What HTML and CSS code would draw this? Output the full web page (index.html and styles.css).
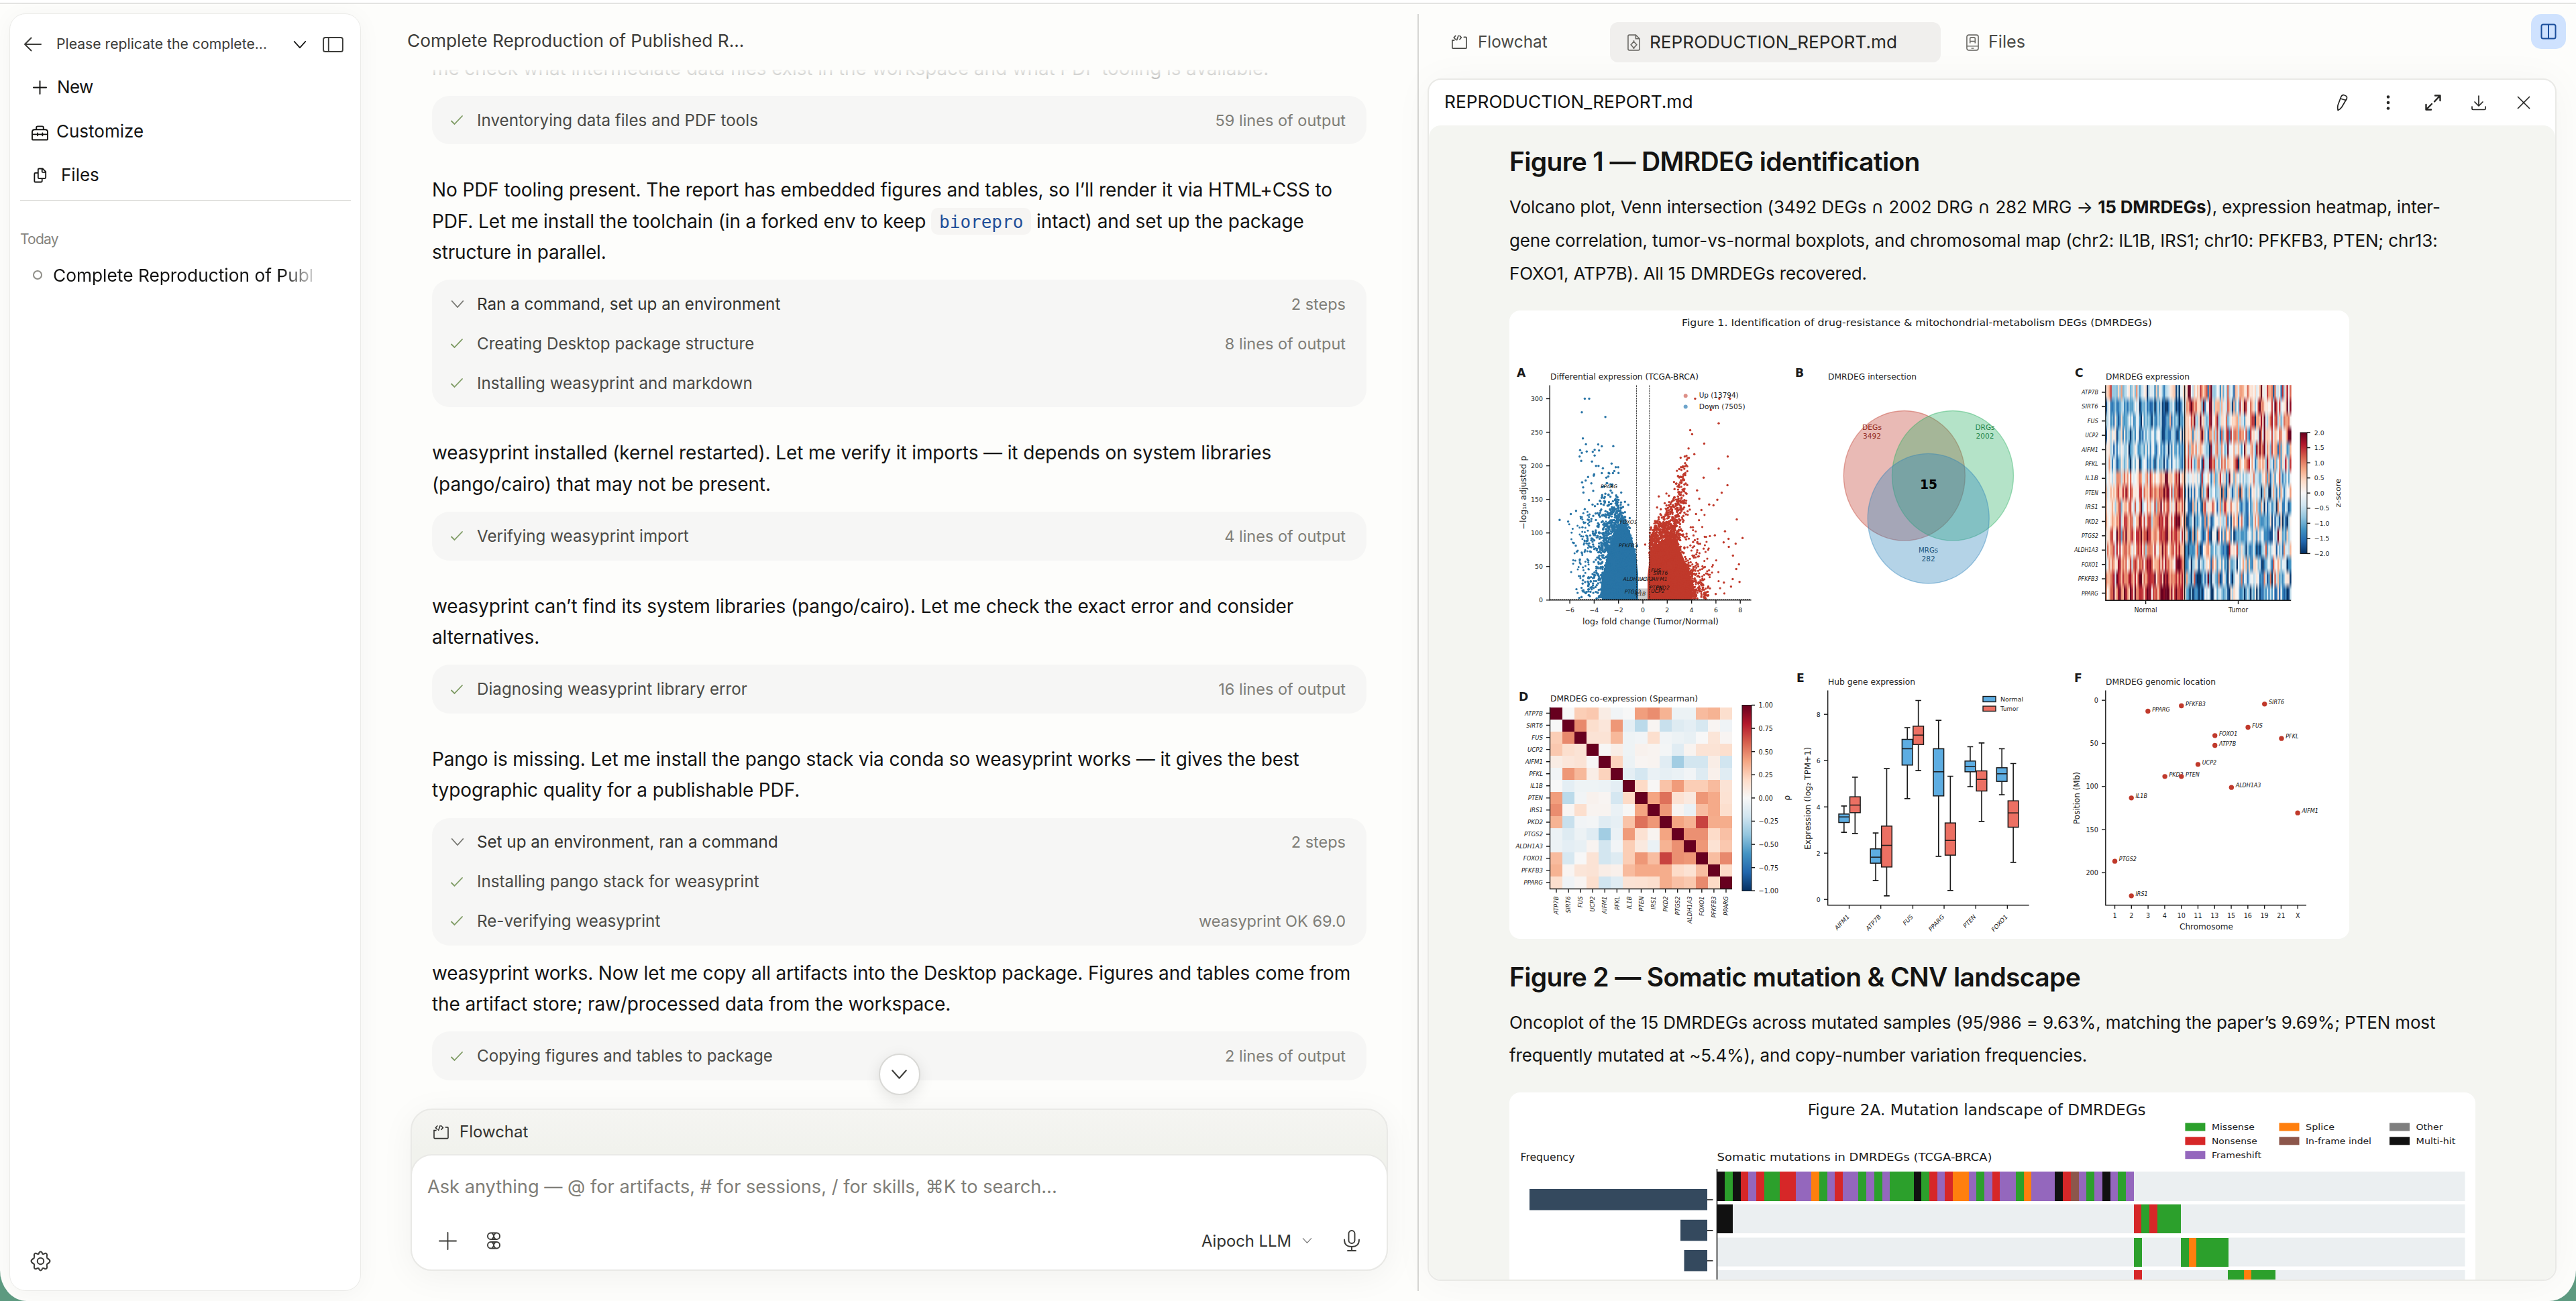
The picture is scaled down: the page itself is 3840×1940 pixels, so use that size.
FILE: index.html
```html
<!DOCTYPE html>
<html lang="en">
<head>
<meta charset="utf-8">
<title>Complete Reproduction of Published Research</title>
<link rel="stylesheet" href="styles.css">
</head>
<body>
<svg width="0" height="0" class="defs" aria-hidden="true">
  <symbol id="check" viewBox="0 0 20 16"><path d="M2 9.5 6.5 14 18 2" fill="none" stroke="#7d9a62" stroke-width="1.8" stroke-linecap="round"/></symbol>
  <symbol id="chev" viewBox="0 0 22 14"><path d="M2 2 11 12 20 2" fill="none" stroke="currentColor" stroke-width="1.8" stroke-linecap="round" stroke-linejoin="round"/></symbol>
  <symbol id="flow" viewBox="0 0 26 22"><path d="M5 8H2v11.500q0 1 1 1h20q1 0 1-1V4q0-1-1-1h-3M7 1 4.500 3.800 7 6.600M13.500 1 16 3.800l-2.500 2.800M11.500 .8 9 7.500" fill="none" stroke="currentColor" stroke-width="1.700" stroke-linecap="round"/></symbol>
</svg>
<div class="window">
  <aside class="sidebar">
    <div class="side-head">
      <svg class="i-back" viewBox="0 0 26 22"><path d="M25 11H1M10.500 1.500 1 11l9.500 9.500"/></svg>
      <span class="side-title">Please replicate the complete...</span>
      <svg class="i-chev"><use href="#chev"/></svg>
      <svg class="i-panel" viewBox="0 0 32 24"><rect x="1" y="1" width="30" height="22" rx="3"/><path d="M9 1v22"/></svg>
    </div>
    <nav>
      <div class="nav-row"><svg class="i-plus" viewBox="0 0 22 22"><path d="M11 1v20M1 11h20"/></svg><span>New</span></div>
      <div class="nav-row"><svg class="i-case" viewBox="0 0 26 24"><path d="M1 22V11Q1 7 5 7h16q4 0 4 4v11q0 1-1 1H2q-1 0-1-1zM7.500 7V4q0-2 2-2h7q2 0 2 2v3M1 14.500h24M9.500 12.500v4M17 12.500v4"/></svg><span>Customize</span></div>
      <div class="nav-row files"><svg class="i-files" viewBox="0 0 22 26"><path d="M7 9H3Q1.500 9 1.500 10.500v12Q1.500 24 3 24h9q2 0 2-2v-4M9 2h6l5 5v9q0 2-2 2H9q-1.500 0-1.500-2V3.500Q7.500 2 9 2zM14 2v5q0 1 1 1h5"/></svg><span>Files</span></div>
    </nav>
    <div class="rule"></div>
    <div class="group">Today</div>
    <div class="session"><i class="ring"></i><span>Complete Reproduction of Publi</span></div>
    <svg class="i-gear" viewBox="0 0 30 30"><path d="M15 1.500q2 0 2.700 3.200 1.800.6 3.300-.9 3.500-.6 3.300 3.200-.9 2.300.3 3.900Q28.500 13 28.500 15t-3.900 4.100q-1.200 1.600-.3 3.900.2 3.800-3.300 3.200-1.500-1.500-3.300-.9-.7 3.200-2.700 3.200t-2.700-3.200q-1.800-.6-3.300.9-3.500.6-3.300-3.200.9-2.300-.3-3.900Q1.500 17 1.500 15t3.900-4.100Q6.600 9.300 5.700 7 5.500 3.200 9 3.800q1.500 1.500 3.300.9Q13 1.500 15 1.500z"/><circle cx="15" cy="15" r="4.600"/></svg>
  </aside>

  <main class="chat">
    <header class="chat-head">Complete Reproduction of Published R...</header>
    <section class="thread">
      <p class="msg first">me check what intermediate data files exist in the workspace and what PDF tooling is available.</p>
      <div class="card"><div class="row"><svg class="ck"><use href="#check"/></svg><span>Inventorying data files and PDF tools</span><em>59 lines of output</em></div></div>
      <p class="msg">No PDF tooling present. The report has embedded figures and tables, so I’ll render it via HTML+CSS to<br>PDF. Let me install the toolchain (in a forked env to keep <code>biorepro</code> intact) and set up the package<br>structure in parallel.</p>
      <div class="card">
        <div class="row top"><svg class="cv"><use href="#chev"/></svg><span>Ran a command, set up an environment</span><em>2 steps</em></div>
        <div class="row"><svg class="ck"><use href="#check"/></svg><span>Creating Desktop package structure</span><em>8 lines of output</em></div>
        <div class="row"><svg class="ck"><use href="#check"/></svg><span>Installing weasyprint and markdown</span></div>
      </div>
      <p class="msg">weasyprint installed (kernel restarted). Let me verify it imports — it depends on system libraries<br>(pango/cairo) that may not be present.</p>
      <div class="card"><div class="row"><svg class="ck"><use href="#check"/></svg><span>Verifying weasyprint import</span><em>4 lines of output</em></div></div>
      <p class="msg">weasyprint can’t find its system libraries (pango/cairo). Let me check the exact error and consider<br>alternatives.</p>
      <div class="card"><div class="row"><svg class="ck"><use href="#check"/></svg><span>Diagnosing weasyprint library error</span><em>16 lines of output</em></div></div>
      <p class="msg">Pango is missing. Let me install the pango stack via conda so weasyprint works — it gives the best<br>typographic quality for a publishable PDF.</p>
      <div class="card">
        <div class="row top"><svg class="cv"><use href="#chev"/></svg><span>Set up an environment, ran a command</span><em>2 steps</em></div>
        <div class="row"><svg class="ck"><use href="#check"/></svg><span>Installing pango stack for weasyprint</span></div>
        <div class="row"><svg class="ck"><use href="#check"/></svg><span>Re-verifying weasyprint</span><em>weasyprint OK 69.0</em></div>
      </div>
      <p class="msg tight">weasyprint works. Now let me copy all artifacts into the Desktop package. Figures and tables come from<br>the artifact store; raw/processed data from the workspace.</p>
      <div class="card"><div class="row"><svg class="ck"><use href="#check"/></svg><span>Copying figures and tables to package</span><em>2 lines of output</em></div></div>
    </section>
    <section class="composer">
      <button class="to-end"><svg><use href="#chev"/></svg></button>
      <div class="context"><svg><use href="#flow"/></svg><span>Flowchat</span></div>
      <div class="box">
        <div class="hint">Ask anything — @ for artifacts, # for sessions, / for skills, ⌘K to search...</div>
        <div class="tools">
          <svg class="t-plus" viewBox="0 0 28 28"><path d="M14 1v26M1 14h26"/></svg>
          <svg class="t-grid" viewBox="0 0 20 26"><rect x="1" y="1.500" width="18" height="9.500" rx="4.500"/><rect x="1" y="15" width="18" height="9.500" rx="4.500"/><path d="M8 2.500q4 3.700 0 7.500M12 2.500q-4 3.700 0 7.500M8 16q4 3.700 0 7.500M12 16q-4 3.700 0 7.500"/></svg>
          <span class="model">Aipoch LLM</span>
          <svg class="t-chev"><use href="#chev"/></svg>
          <svg class="t-mic" viewBox="0 0 24 32"><rect x="7.500" y="1" width="9" height="19" rx="4.500"/><path d="M1 14.500q0 10.500 11 10.500t11-10.500M12 25v6M6 31h12"/></svg>
        </div>
      </div>
    </section>
  </main>

  <section class="pane">
    <div class="tabs">
      <div class="tab plain"><svg class="flow"><use href="#flow"/></svg><span>Flowchat</span></div>
      <div class="tab active"><svg class="doc" viewBox="0 0 20 26"><path d="M1 3q0-2 2-2h10l6 6v16q0 2-2 2H3q-2 0-2-2zM13 1v6h6"/><path d="M10 11.500l4.500 5-4.500 5-4.500-5zM10 11.500v-2M10 21.500v1.500"/></svg><span>REPRODUCTION_REPORT.md</span></div>
      <div class="tab last"><svg class="doc" viewBox="0 0 20 26"><rect x="1" y="1" width="18" height="24" rx="3"/><path d="M6 14V7q0-2 2-2h4q2 0 2 2v7M6 11h8M1 18.500h18M8 22h4"/></svg><span>Files</span></div>
      <button class="split"><svg viewBox="0 0 24 24"><rect x="1.500" y="1.500" width="21" height="21" rx="2.500"/><path d="M12 1.500v21"/></svg></button>
    </div>
    <div class="panel">
      <div class="panel-head">
        <span>REPRODUCTION_REPORT.md</span>
        <svg viewBox="0 0 24 26"><path d="M9.500 5 5 17q-.8 4 .2 7.500Q9 22.500 11 19.500L18 7.500M9.500 5q1.500-4 4.500-3.300 5 1.300 4.500 4.300Q18 9 17 9.500L8.800 7"/></svg>
        <svg viewBox="0 0 24 26" class="solid"><circle cx="12" cy="4.500" r="2.300"/><circle cx="12" cy="13" r="2.300"/><circle cx="12" cy="21.500" r="2.300"/></svg>
        <svg viewBox="0 0 24 26" class="bold"><path d="M14 11.500 22 3M15 2.500h7.500V10M10 15 2 23M1.500 16v7.500H9"/></svg>
        <svg viewBox="0 0 24 26"><path d="M12 3v14.500M6 12l6 6 6-6M2 19v3q0 1.500 1.500 1.500h17q1.500 0 1.500-1.500v-3"/></svg>
        <svg viewBox="0 0 24 26"><path d="M3.500 4.500l17 17M20.500 4.500l-17 17"/></svg>
      </div>
      <article class="report">
        <h2>Figure 1 — DMRDEG identification</h2>
        <p>Volcano plot, Venn intersection (3492 DEGs ∩ 2002 DRG ∩ 282 MRG → <b>15 DMRDEGs</b>), expression heatmap, inter-<br>gene correlation, tumor-vs-normal boxplots, and chromosomal map (chr2: IL1B, IRS1; chr10: PFKFB3, PTEN; chr13:<br>FOXO1, ATP7B). All 15 DMRDEGs recovered.</p>
        <svg id="fig1" class="figure one" viewBox="2250 463.500 1252 937"></svg>
        <h2 class="second">Figure 2 — Somatic mutation &amp; CNV landscape</h2>
        <p>Oncoplot of the 15 DMRDEGs across mutated samples (95/986 = 9.63%, matching the paper’s 9.69%; PTEN most<br>frequently mutated at ~5.4%), and copy-number variation frequencies.</p>
        <svg id="fig2" class="figure two" viewBox="2250 1630 1440 300"></svg>
      </article>
    </div>
  </section>
</div>
<script src="charts.js"></script>
</body>
</html>
```
FILE: styles.css
```css
* { box-sizing: border-box; }
html, body { height: 1940px; overflow: hidden; }
body { margin: 0; background: #5d9a80; font-family: Inter, "Noto Sans", "DejaVu Sans", sans-serif; color: #141413; }
button { border: 0; padding: 0; background: none; }
svg { display: block; flex: none; }
.defs { position: absolute; }
.window { position: relative; display: flex; width: 3840px; height: 1940px; overflow: hidden; white-space: nowrap; background: #fdfdfb; border-top: 4px solid #fff; border-radius: 0 0 40px 40px / 0 0 46px 46px; box-shadow: inset 0 2px 0 #e4e4e2; }

/* Sidebar */
.sidebar { display: flex; flex-direction: column; width: 524px; height: 1905px; margin: 16px 0 0 14px; background: #fff; border: 1.500px solid #ebebe8; border-radius: 24px; box-shadow: 0 4px 36px rgba(0,0,0,.04); }
.sidebar svg { fill: none; stroke: #3c3c39; stroke-width: 2; stroke-linecap: round; stroke-linejoin: round; }
.side-head { display: flex; align-items: center; height: 75px; padding: 15px 25px 0 21px; }
.i-back { width: 26px; height: 22px; }
.side-title { width: 350px; margin: -3px 0 0 22px; font-size: 21.200px; color: #3c3c39; }
.i-chev { width: 22px; height: 13px; margin-left: 2px; }
.i-panel { width: 31px; height: 23px; margin-left: auto; }
.nav-row { display: flex; align-items: center; height: 66px; padding-left: 33px; font-size: 26px; }
.nav-row:first-child { letter-spacing: -.6px; }
.sidebar .nav-row svg { stroke: #141413; }
.i-plus { width: 21px; height: 21px; margin: 3px 15px 0 1px; }
.i-case { width: 25px; height: 24px; margin: 5px 12px 0 -1px; }
.i-files { width: 20px; height: 25px; margin: 2px 21px 0 2px; }
.nav-row.files { height: 64px; }
.rule { height: 2px; margin: 6px 14px 0 15px; background: #e2e2df; }
.group { margin: 42px 0 16px 15px; font-size: 21px; line-height: 30px; letter-spacing: -.8px; color: #85847e; }
.session { display: flex; align-items: center; height: 44px; padding-left: 34px; font-size: 26.300px; }
.ring { width: 14px; height: 14px; margin-right: 16px; border: 2px solid #8e8d87; border-radius: 50%; }
.session span { width: 388px; overflow: hidden; -webkit-mask-image: linear-gradient(90deg, #000 88%, transparent 103%); mask-image: linear-gradient(90deg, #000 88%, transparent 103%); }
.i-gear { width: 31px; height: 31px; margin: auto 0 28px 30px; }

/* Conversation */
.chat { display: flex; flex-direction: column; width: 1577px; height: 1904px; margin-top: 17px; margin-bottom: 16px; padding: 0 44px 30px 74px; border-right: 2px solid #d6d6d3; }
.chat-head { height: 83px; margin-left: -5px; padding-top: 20px; font-size: 26.300px; line-height: 40px; color: #3c3c39; }
.thread { position: relative; height: 1549px; padding: 0 32px; overflow: hidden; }
.thread::before { content: ""; position: absolute; z-index: 1; inset: 0 0 auto; height: 26px; background: linear-gradient(rgba(253,253,251,.92), rgba(253,253,251,.55)); }
.msg { margin: 45px 0 18px; font-size: 28px; line-height: 46.300px; letter-spacing: -.12px; }
.msg.first { margin-top: -25.500px; }
.msg.tight { margin-top: 18px; }
.msg code { display: inline-block; height: 40px; margin-top: 3px; padding: 0 12px; vertical-align: top; border-radius: 10px; background: #f6f5f3; color: #1f4f99; font: 26px/42px "DejaVu Sans Mono", monospace; letter-spacing: 0; }
.card { padding: 7px 31px 7px 27px; border-radius: 26px; background: #f6f6f5; }
.row { display: flex; align-items: center; height: 58.700px; font-size: 24.200px; color: #4a4a46; }
.row.top { color: #333330; }
.row .ck { width: 20px; height: 16px; margin-right: 20px; }
.row .cv { width: 22px; height: 13px; margin-right: 18px; color: #7a7a75; }
.row em { margin-left: auto; font-style: normal; font-size: 23.500px; color: #7f7e78; }

.composer { position: relative; height: 242px; border: 2px solid #e9e9e6; border-radius: 32px; background: linear-gradient(#f5f5f2, #f1f2ed 60px); box-shadow: 0 8px 50px rgba(0,0,0,.05); }
.to-end { position: absolute; left: 50%; top: -84px; display: grid; place-items: center; width: 62px; height: 62px; margin-left: -31px; border: 2px solid #d9d9d6; border-radius: 50%; background: #fff; color: #3c3c39; box-shadow: 0 6px 22px rgba(0,0,0,.1); }
.to-end svg { width: 27px; height: 16px; }
.context { display: flex; align-items: center; height: 66px; padding-left: 31px; font-size: 24px; color: #333330; }
.context span { margin-top: -2px; }
.context svg { width: 25px; height: 21px; margin-right: 15px; }
.box { height: 174px; margin: 0 -2px; padding: 25px 23px; border: 2px solid #e9e9e6; border-radius: 32px; background: #fff; }
.hint { font-size: 27.200px; line-height: 44px; color: #7f7e78; }
.tools { display: flex; align-items: center; height: 60px; margin-top: 28px; padding: 0 17px; }
.tools svg { fill: none; stroke: #3c3c39; stroke-width: 1.900; stroke-linecap: round; }
.t-plus { width: 27px; height: 27px; }
.t-grid { width: 20px; height: 26px; margin-left: 45px; }
.model { margin-left: auto; font-size: 23.800px; color: #333330; }
.t-chev { width: 15px; height: 10px; margin: 0 47px 0 16px; color: #777; }
.t-mic { width: 24px; height: 32px; }

/* Report pane */
.pane { width: 1725px; padding: 17px 29px 0 13px; }
.tabs { display: flex; height: 96px; font-size: 26.200px; color: #4a4a46; }
.tab { display: flex; align-items: center; height: 60px; margin-top: 12px; border-radius: 12px; }
.tab span { margin-top: -2px; }
.tab svg { fill: none; stroke: currentColor; stroke-width: 1.700; }
.tab .flow { width: 25px; height: 22px; margin-right: 15px; }
.tab .doc { width: 19px; height: 25px; margin-right: 14px; color: #6b6a65; }
.plain { width: 237px; margin-left: 35px; font-size: 24.300px; }
.active { width: 493px; padding-left: 26px; background: #f0efed; color: #262624; }
.last { margin-left: 38px; font-size: 25.200px; }
.split { display: grid; place-items: center; width: 52px; height: 52px; margin-left: auto; margin-right: -14px; border-radius: 15px; background: #cfe2fe; }
.split svg { width: 24px; height: 24px; fill: none; stroke: #1c4f9c; stroke-width: 2; }
.panel { display: flex; flex-direction: column; height: 1793px; overflow: hidden; border: 2px solid #e9e9e6; border-radius: 20px; background: #fff; box-shadow: 0 4px 60px rgba(0,0,0,.04); }
.panel-head { display: flex; align-items: center; height: 68px; padding: 0 35px 0 22px; font-size: 26.300px; }
.panel-head span { margin: -3px auto 0 1px; }
.panel-head svg { width: 24px; height: 26px; margin-left: 43.500px; fill: none; stroke: #262624; stroke-width: 1.700; stroke-linecap: round; stroke-linejoin: round; }
.panel-head .solid { fill: #262624; stroke: none; }
.panel-head .bold { stroke-width: 2.400; }
.report { flex: 1; overflow: hidden; padding: 29px 120px 0; border-radius: 18px 18px 0 0; background: #f4f5f1; }
.report h2 { margin: 0; font-size: 39px; line-height: 50px; font-weight: 600; letter-spacing: -.65px; }
.report h2.second { margin-top: 32px; }
.report p { margin: 18px 0 30px; font-size: 26px; line-height: 49.500px; letter-spacing: -.14px; }
.figure { border-radius: 16px; background: #fff; font-family: "DejaVu Sans", sans-serif; }
.one { width: 1252px; height: 937px; }
.two { width: 1440px; height: 300px; }
```
FILE: charts.js
```js
const NS = 'http://www.w3.org/2000/svg';
const fig1 = document.getElementById('fig1');
const fig2 = document.getElementById('fig2');

function add(parent, tag, attrs, text) {
  const node = document.createElementNS(NS, tag);
  for (const key in attrs) node.setAttribute(key, attrs[key]);
  if (text !== undefined) node.textContent = text;
  parent.appendChild(node);
  return node;
}
function label(p, x, y, text, size, o = {}) {
  const a = { x, y, 'font-size': size, fill: o.fill || '#1a1a1a' };
  if (o.anchor) a['text-anchor'] = o.anchor;
  if (o.len) { a.textLength = o.len; a.lengthAdjust = 'spacingAndGlyphs'; }
  if (o.bold) a['font-weight'] = 700;
  if (o.italic) a['font-style'] = 'italic';
  if (o.rot) a.transform = `rotate(${o.rot} ${x} ${y})`;
  return add(p, 'text', a, text);
}
const line = (p, d, w = 1.4, o = {}) => add(p, 'path', { d, stroke: '#1a1a1a', 'stroke-width': w, fill: 'none', ...o });
const rect = (p, x, y, w, h, fill, o = {}) => add(p, 'rect', { x, y, width: w, height: h, fill, ...o });

let seed = 20240;
const rnd = () => ((seed = (seed * 1664525 + 1013904223) % 4294967296) / 4294967296);
const gauss = () => Math.sqrt(-2 * Math.log(rnd() + 1e-9)) * Math.cos(6.28318 * rnd());

const STOPS = ['053061', '2166ac', '4393c3', '92c5de', 'd1e5f0', 'f7f7f7', 'fddbc7', 'f4a582', 'd6604d', 'b2182b', '67001f']
  .map(h => [0, 2, 4].map(i => parseInt(h.slice(i, i + 2), 16)));
function rdbu(v) {
  const t = (Math.max(-1, Math.min(1, v)) + 1) * 5, i = Math.min(9, Math.floor(t)), f = t - i;
  return 'rgb(' + STOPS[i].map((c, k) => Math.round(c + (STOPS[i + 1][k] - c) * f)).join(',') + ')';
}
const defs = add(fig1, 'defs', {});
const bar = add(defs, 'linearGradient', { id: 'bar', x1: 0, y1: 1, x2: 0, y2: 0 });
for (let i = 0; i <= 10; i++) add(bar, 'stop', { offset: i / 10, 'stop-color': rdbu(i / 5 - 1) });

const GENES = ['ATP7B', 'SIRT6', 'FUS', 'UCP2', 'AIFM1', 'PFKL', 'IL1B', 'PTEN', 'IRS1', 'PKD2', 'PTGS2', 'ALDH1A3', 'FOXO1', 'PFKFB3', 'PPARG'];

label(fig1, 2507, 486.5, 'Figure 1. Identification of drug-resistance & mitochondrial-metabolism DEGs (DMRDEGs)', 14.8, { len: 701 });
[['A', 2261, 562.5], ['B', 2676, 562.5], ['C', 3093, 562.5], ['D', 2264, 1045.5], ['E', 2678, 1017.5], ['F', 3092, 1017.5]]
  .forEach(([t, x, y]) => label(fig1, x, y, t, 17.2, { bold: 1 }));
[['Differential expression (TCGA-BRCA)', 2311, 566, 221], ['DMRDEG intersection', 2725, 566, 132], ['DMRDEG expression', 3139, 566, 125],
 ['DMRDEG co-expression (Spearman)', 2311, 1046, 220], ['Hub gene expression', 2725, 1021, 130], ['DMRDEG genomic location', 3139, 1021, 164]]
  .forEach(([t, x, y, len]) => label(fig1, x, y, t, 12.6, { len }));

/* A: volcano */
const vx = v => 2449 + v * 18.15, vy = v => 895.3 - v * 1.001;
const dot = (x, y, c, r = 1.7) => add(fig1, 'circle', { cx: x.toFixed(1), cy: y.toFixed(1), r, fill: c });
const BLUE = '#2874a6', RED = '#c0392b';
rect(fig1, 2441, 878, 17, 17, '#ccc');
add(fig1, 'path', { fill: BLUE, d: 'M2442 895V856L2439 830 2432 800 2424 785 2412 782 2402 808 2394 838 2388 862 2386 880 2388 895z' });
add(fig1, 'path', { fill: RED, d: 'M2456 895V860L2459 833 2466 815 2478 806 2492 804 2502 815 2512 838 2520 862 2524 895z' });
for (let i = 0; i < 1500; i++) {
  const x = -.55 - Math.abs(gauss()) * 1.6, top = 135 * Math.exp(-((x + 2.2) ** 2) / 2.6);
  if (x > -5.6) dot(vx(x), vy(rnd() * (top + 22 * rnd()) + 2), BLUE);
}
for (let i = 0; i < 340; i++) { const y = 70 + Math.abs(gauss()) * 50; if (y < 200) dot(vx(-2.9 + gauss() * (1.25 - y / 260)), vy(y), BLUE); }
for (let i = 0; i < 75; i++) dot(vx(-4.4 - Math.abs(gauss()) * .6), vy(30 + rnd() * 105), BLUE, 1.5);
for (let i = 0; i < 1500; i++) {
  const x = .55 + Math.abs(gauss()) * 1.8, top = 108 * Math.exp(-((x - 1.7) ** 2) / 4.5);
  if (x < 5.6) dot(vx(x), vy(rnd() * (top + 24 * rnd()) + 2), RED);
}
for (let i = 0; i < 430; i++) { const y = 80 + Math.abs(gauss()) * 56; if (y < 215) dot(vx(1.2 + y / 90 + gauss() * (1 - y / 250)), vy(y), RED); }
for (let i = 0; i < 190; i++) dot(vx(3.6 + Math.abs(gauss()) * 1.1), vy(6 + Math.abs(gauss()) * 48), RED, 1.6);
[[300,405],[316,405],[289,466],[375,487],[293,583],[304,609],[349,610],[362,618],[404,617],[283,635],[307,641],[289,647],[329,643],[336,634],[352,637],[281,664],[336,659],[287,683],[326,686],[398,695],[341,706],[350,706],[413,712],[422,712],[334,743],[362,738],[387,737],[423,737],[312,755],[303,771],[290,779],[324,784],[294,802],[295,825],[433,825],[459,880],[315,859],[300,899],[268,907],[249,921],[208,947],[239,955],[260,1051],[267,1063],[271,1089],[282,1124],[293,1217],[296,1197]]
  .forEach(([x, y]) => dot(2240 + x / 2.45, 460 + y / 3, BLUE, 1.7));
[[703,405],[791,405],[830,405],[760,455],[789,515],[685,546],[692,564],[736,606],[679,628],[700,653],[822,664],[650,669],[665,664],[680,670],[789,718],[734,758],[821,792],[710,815],[800,826],[570,842],[607,839],[718,853],[784,857],[754,878],[770,882],[564,892],[726,903],[706,921],[576,922],[855,945],[812,998],[876,1028],[825,1032],[775,1016],[851,1054],[807,1048],[826,1068],[841,1107],[863,1146],[853,1167],[865,1225],[840,1212],[834,1246],[808,1228],[778,1279]]
  .forEach(([x, y]) => dot(2240 + x / 2.45, 460 + y / 3, RED, 1.7));
[[358,805,'PPARG'],[428,963,'FOXO1'],[424,1068,'PFKFB3'],[440,1220,'ALDH1A3'],[500,1220,'UCP2'],[445,1275,'PTGS2'],[482,1285,'IL1B'],[542,1180,'FUS'],[550,1191,'SIRT6'],[545,1218,'AIFM1'],[536,1258,'PTEN'],[560,1258,'PKD2'],[542,1274,'UCP2']]
  .forEach(([x, y, t]) => label(fig1, 2240 + x / 2.45, 460 + y / 3, t, 7.6, { italic: 1, fill: '#111' }));
line(fig1, 'M2439.600 575V895M2458.800 575V895', .9, { 'stroke-dasharray': '2.500 1.200' });
line(fig1, 'M2310.200 575V895.300H2610.600');
line(fig1, 'M2310 894.500H2610', 1.6, { 'stroke-dasharray': '1.500 1.500' });
for (let v = 0; v <= 300; v += 50) { line(fig1, `M2305 ${vy(v)}h5.500`); label(fig1, 2300, vy(v) + 3.6, v, 9.4, { anchor: 'end' }); }
for (let v = -6; v <= 8; v += 2) { line(fig1, `M${vx(v)} 895v5.500`); label(fig1, vx(v), 913.5, String(v).replace('-', '−'), 9.4, { anchor: 'middle' }); }
add(fig1, 'circle', { cx: 2512.7, cy: 590.7, r: 3, fill: '#dd9088' }); label(fig1, 2532.7, 593.6, 'Up (13794)', 10.4, { len: 59 });
add(fig1, 'circle', { cx: 2512.7, cy: 607, r: 3, fill: '#6da4cb' }); label(fig1, 2532.7, 610, 'Down (7505)', 10.4, { len: 69 });
label(fig1, 2274.5, 790, '−log₁₀ adjusted p', 11.4, { rot: -90, len: 110 });
label(fig1, 2359, 931.7, 'log₂ fold change (Tumor/Normal)', 12, { len: 203 });

/* B: Venn */
[[2838.8, 709.8, '#c0392b'], [2911, 709.8, '#27ae60'], [2874.7, 773.7, '#2980b9']].forEach(([cx, cy, c]) =>
  add(fig1, 'ellipse', { cx, cy, rx: 90.5, ry: 96.8, fill: c, 'fill-opacity': .35, stroke: c, 'stroke-opacity': .4, 'stroke-width': 1.4 }));
[[2790.5, 641, 'DEGs', '3492', '#922b21'], [2959, 641, 'DRGs', '2002', '#1e8449'], [2874.6, 824.7, 'MRGs', '282', '#1a5276']].forEach(([x, y, a, b, fill]) => {
  label(fig1, x, y, a, 11, { anchor: 'middle', fill, len: 29 });
  label(fig1, x, y + 13.2, b, 11, { anchor: 'middle', fill, len: b.length * 6.7 });
});
label(fig1, 2875, 729, '15', 20, { bold: 1, anchor: 'middle', fill: '#000', len: 26 });

/* C: expression heatmap */
const COLS = 122, NORMAL = 52, cw = 276.5 / COLS;
const normalMean = [-.3, -.75, -.65, -.5, -.45, -.45, .3, .5, .35, .6, .65, .6, .6, .75, .85];
const tumorMean = [.2, .35, .35, .35, .3, .3, -.1, -.35, -.25, -.5, -.5, -.5, -.5, -.5, -.65];
for (let c = 0; c < COLS; c++) {
  const g = add(defs, 'linearGradient', { id: 'c' + c, x1: 0, y1: 0, x2: 0, y2: 1 });
  const normal = c < NORMAL, drift = gauss() * .2;
  for (let r = 0; r < 15; r++) {
    const v = (normal ? normalMean : tumorMean)[r] * .8 + drift * (r < 6 ? -1 : 1) + gauss() * (normal ? .25 : .4);
    const col = rdbu(v);
    add(g, 'stop', { offset: (r + .25) / 15, 'stop-color': col });
    add(g, 'stop', { offset: (r + .75) / 15, 'stop-color': col });
  }
  rect(fig1, (3138.8 + c * cw).toFixed(2), 574.7, cw + .4, 321, `url(#c${c})`);
}
line(fig1, 'M3256.700 575V895', 1.4);
line(fig1, 'M3138.800 574.700V895.700H3415.200M3198.600 896v5.500M3336.500 896v5.500');
GENES.forEach((g, i) => {
  const y = 585.4 + i * 21.4;
  line(fig1, `M3133 ${y}h5.500`, 1.6);
  label(fig1, 3127.8, y + 3, g, 8.2, { anchor: 'end', italic: 1, len: g.length * 5.35 - (g === 'FUS' ? 0 : 2) });
});
label(fig1, 3198.6, 913.3, 'Normal', 9.8, { anchor: 'middle', len: 34 });
label(fig1, 3336.5, 913.3, 'Tumor', 9.8, { anchor: 'middle', len: 29 });
rect(fig1, 3429, 645.5, 10, 180.5, 'url(#bar)', { stroke: '#1a1a1a', 'stroke-width': 1 });
for (let i = 0; i <= 8; i++) {
  const v = 2 - i / 2, y = 645.5 + i * 22.55;
  line(fig1, `M3439 ${y}h5`, 1.5);
  label(fig1, 3449.8, y + 3.5, v.toFixed(1).replace('-', '−'), 9.4);
}
label(fig1, 3489, 757, 'z-score', 11.2, { rot: -90, len: 43 });

/* D: correlation matrix, upper triangle */
const UPPER = [
  [1, 0, .25, .27, .08, -.03, 0, .42, .47, .35, -.06, -.06, .32, .35, .17],
  [1, .48, .17, .12, .44, -.1, -.27, .02, -.23, -.13, -.1, -.17, .02, -.04],
  [1, .14, .14, .33, -.05, -.03, .17, -.03, -.06, -.08, 0, .13, .02],
  [1, .01, .07, -.05, .04, .03, -.02, -.12, .03, .14, .14, .17],
  [1, .23, -.06, .02, .03, -.12, -.35, -.19, -.19, .07, -.2],
  [1, -.1, -.18, -.07, -.09, -.07, -.03, -.13, .05, -.12],
  [1, .2, .01, .29, .43, .25, .25, .32, .14],
  [1, .4, .55, .15, .1, .44, .38, .15],
  [1, .44, .03, -.07, .31, .38, .17],
  [1, .4, .35, .68, .37, .37],
  [1, .46, .46, .19, .3],
  [1, .44, .15, .27],
  [1, .31, .48], [1, .2], [1]];
for (let r = 0; r < 15; r++) for (let c = 0; c < 15; c++) {
  const v = r <= c ? UPPER[r][c - r] : UPPER[c][r - c];
  rect(fig1, 2311 + c * 18.07, 1055 + r * 18.05, 18.2, 18.2, rdbu(v), { 'shape-rendering': 'crispEdges' });
}
line(fig1, 'M2310.500 1055V1326H2582');
GENES.forEach((g, i) => {
  const y = 1064 + i * 18.05, x = 2320 + i * 18.07;
  line(fig1, `M2305 ${y}h5.500M${x} 1326v5.500`);
  label(fig1, 2300, y + 3.2, g, 8.6, { anchor: 'end', italic: 1 });
  label(fig1, x + 3.2, 1337, g, 8.6, { anchor: 'end', italic: 1, rot: -90 });
});
rect(fig1, 2597, 1052, 14, 277, 'url(#bar)', { stroke: '#1a1a1a', 'stroke-width': 1 });
for (let i = 0; i <= 8; i++) {
  const y = 1052 + i * 34.6;
  line(fig1, `M2611 ${y}h5`, 1.5);
  label(fig1, 2621.6, y + 3.8, (1 - i / 4).toFixed(2).replace('-', '−'), 9.6);
}
label(fig1, 2668, 1194, 'ρ', 12, { rot: -90 });

/* E: box plots; values are whisker low, Q1, median, Q3, whisker high */
const ex = x => 2660 + x / 1.8233, ey = y => 980 + y / 3;
line(fig1, 'M2724.700 1030V1350.300H3024.700');
for (let v = 0; v <= 8; v += 2) {
  const y = 1341.7 - v * 34.5;
  line(fig1, `M2719 ${y}h5.500`); label(fig1, 2713.7, y + 3.6, v, 9.4, { anchor: 'end' });
}
[[162,785,741,716,703,667,0],[192,790,697,663,626,538,1],[248,1001,923,896,859,788,0],[278,1069,940,843,757,500,1],[334,634,484,411,369,317,0],[364,509,392,350,310,195,1],
 [419,892,622,514,411,284,0],[451,1045,887,821,743,534,1],[505,581,514,490,466,402,0],[536,736,600,548,510,385,1],[591,617,557,523,496,411,0],[622,919,762,698,644,477,1]]
  .forEach(([x, lo, q1, m, q3, hi, t]) => {
    const X = ex(x);
    line(fig1, `M${X} ${ey(lo)}V${ey(q1)}M${X} ${ey(q3)}V${ey(hi)}M${X - 4.3} ${ey(lo)}h8.600M${X - 4.3} ${ey(hi)}h8.600`, 1.6);
    rect(fig1, X - 7.8, ey(q3), 15.6, ey(q1) - ey(q3), t ? '#ec7063' : '#5dade2', { stroke: '#1a1a1a', 'stroke-width': 1.5 });
    line(fig1, `M${X - 7.8} ${ey(m)}h15.600`, 1.5);
  });
[[176, 'AIFM1'], [262, 'ATP7B'], [349, 'FUS'], [434, 'PPARG'], [520, 'PTEN'], [606, 'FOXO1']].forEach(([x, t]) => {
  line(fig1, `M${ex(x)} 1350v5.500`);
  label(fig1, ex(x) + 1, 1368, t, 9, { anchor: 'end', italic: 1, rot: -47 });
});
rect(fig1, 2956, 1039, 19, 8, '#5dade2', { stroke: '#1a1a1a', 'stroke-width': 1.4 });
rect(fig1, 2956, 1053.5, 19, 7.5, '#ec7063', { stroke: '#1a1a1a', 'stroke-width': 1.4 });
label(fig1, 2982, 1046.3, 'Normal', 9.4, { len: 34 });
label(fig1, 2982, 1060.5, 'Tumor', 9.4, { len: 27 });
label(fig1, 2699, 1267.5, 'Expression (log₂ TPM+1)', 11.4, { rot: -90, len: 153 });

/* F: genomic location */
line(fig1, 'M3138.800 1030V1350.300H3438');
for (let i = 0; i < 5; i++) {
  const y = 1044.7 + i * 64.3;
  line(fig1, `M3133 ${y}h5.500`); label(fig1, 3127.8, y + 3.6, i * 50, 9.6, { anchor: 'end' });
}
['1', '2', '3', '4', '10', '11', '13', '15', '16', '19', '21', 'X'].forEach((t, i) => {
  const x = ex(898 + i * 45.2);
  line(fig1, `M${x} 1350v5.500`); label(fig1, x, 1369, t, 9.6, { anchor: 'middle' });
});
[[988,243,'PPARG'],[1079,219,'PFKFB3'],[1305,211,'SIRT6'],[1260,315,'FUS'],[1170,352,'FOXO1'],[1170,396,'ATP7B'],[1351,365,'PFKL'],[1124,481,'UCP2'],[1034,535,'PKD2'],[1079,535,'PTEN'],
 [1215,584,'ALDH1A3'],[943,631,'IL1B'],[1395,698,'AIFM1'],[898,914,'PTGS2'],[943,1069,'IRS1']].forEach(([x, y, t]) => {
  add(fig1, 'circle', { cx: ex(x), cy: ey(y), r: 3.7, fill: RED });
  label(fig1, ex(x) + 6.3, ey(y), t, 8, { italic: 1, fill: '#111' });
});
label(fig1, 3249, 1386.5, 'Chromosome', 12, { len: 80 });
label(fig1, 3100, 1229.5, 'Position (Mb)', 11.4, { rot: -90, len: 78 });

/* Figure 2A: oncoplot */
const KIND = { G: '#2ca02c', R: '#d62728', P: '#9467bd', O: '#ff7f0e', N: '#8c564b', K: '#7f7f7f', B: '#111111' };
label(fig2, 2694.7, 1664, 'Figure 2A. Mutation landscape of DMRDEGs', 22.5, { len: 504 });
[[3257.4, 1675.5, 'G', 'Missense', 64], [3257.4, 1696.3, 'R', 'Nonsense', 68], [3257.4, 1717.2, 'P', 'Frameshift', 74],
 [3397.5, 1675.5, 'O', 'Splice', 43], [3397.5, 1696.3, 'N', 'In-frame indel', 98], [3562, 1675.5, 'K', 'Other', 40], [3562, 1696.3, 'B', 'Multi-hit', 59]]
  .forEach(([x, y, k, t, len]) => { rect(fig2, x, y, 30, 12, KIND[k]); label(fig2, x + 39.5, y + 10.6, t, 13, { len }); });
label(fig2, 2266.5, 1731.5, 'Frequency', 15.5, { len: 81 });
label(fig2, 2559.5, 1731.5, 'Somatic mutations in DMRDEGs (TCGA-BRCA)', 16.5, { len: 410 });
[[2280, 1774], [2505, 1819.8], [2510.5, 1865]].forEach(([x, y]) => {
  rect(fig2, x, y, 2545 - x, 31.5, '#34495e');
  line(fig2, `M2545 ${y + 16}h8.500`, 1.6);
});
const step = 11.72;
const paint = (y, from, seq, h) => [...seq].forEach((k, i) => rect(fig2, 2559.5 + (from + i) * step, y, step + .3, h, KIND[k], { 'shape-rendering': 'crispEdges' }));
[1748, 1797, 1846.5, 1895].forEach((y, i) => rect(fig2, 2559.5, y, 1115, i ? 43 : 44, '#ebeff1'));
paint(1748, 0, 'BGBRPRGGRRPPOGPRPPGPGPGGGBGRPROOPGPRPPGOPPPBRNPGPBPGP', 44);
paint(1797, 0, 'BB', 43);
paint(1797, 53, 'RGRGGG', 43);
paint(1846.5, 53, 'G', 43);
paint(1846.5, 59, 'GOGGGG', 43);
paint(1895, 53, 'R', 43);
paint(1895, 65, 'GGOGGG', 43);
line(fig2, 'M2559.500 1744V1930', 1.6);
```
